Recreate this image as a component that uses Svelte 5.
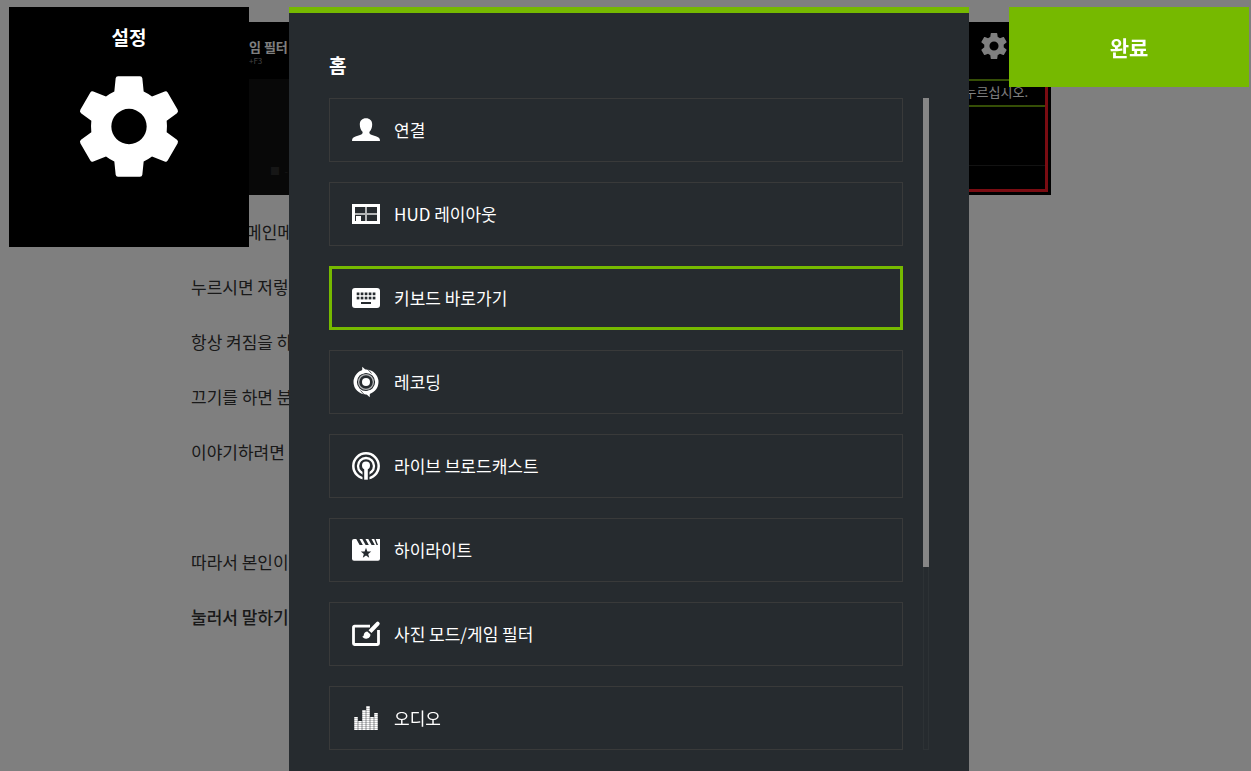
<script lang="ts">
    type MenuItem = {
        id: string;
        label: string;
    };

    const items: MenuItem[] = [
        { id: "connect", label: "연결" },
        { id: "hud", label: "HUD 레이아웃" },
        { id: "keyboard", label: "키보드 바로가기" },
        { id: "record", label: "레코딩" },
        { id: "broadcast", label: "라이브 브로드캐스트" },
        { id: "highlight", label: "하이라이트" },
        { id: "photo", label: "사진 모드/게임 필터" },
        { id: "audio", label: "오디오" }
    ];

    const keyCols = [4.7, 8.7, 12.7, 16.7, 20.7];

    // top of each equalizer bar
    const bars = [13, 17, 6, 2, 13, 9];

    let selected = $state("keyboard");
</script>

<main class="page">
    <div class="shot">
        <div class="shot-left">
            <div class="shot-head">
                <b>임 필터</b>
                <small>+F3</small>
            </div>
            <div class="shot-body">■ &nbsp;-</div>
        </div>
        <div class="shot-right">
            <div class="shot-head">
                <svg viewBox="2 2 20 20" width="26" height="26">
                    <path d="M19.43 12.98c.04-.32.07-.64.07-.98s-.03-.66-.07-.98l2.11-1.65c.19-.15.24-.42.12-.64l-2-3.46c-.12-.22-.39-.3-.61-.22l-2.49 1c-.52-.4-1.08-.73-1.69-.98l-.38-2.65C14.46 2.18 14.25 2 14 2h-4c-.25 0-.46.18-.49.42l-.38 2.65c-.61.25-1.17.59-1.69.98l-2.49-1c-.23-.09-.49 0-.61.22l-2 3.46c-.13.22-.07.49.12.64l2.11 1.65c-.04.32-.07.65-.07.98s.03.66.07.98l-2.11 1.65c-.19.15-.24.42-.12.64l2 3.46c.12.22.39.3.61.22l2.49-1c.52.4 1.08.73 1.69.98l.38 2.65c.03.24.24.42.49.42h4c.25 0 .46-.18.49-.42l.38-2.65c.61-.25 1.17-.59 1.69-.98l2.49 1c.23.09.49 0 .61-.22l2-3.46c.12-.22.07-.49-.12-.64l-2.11-1.65zM12 15.500a3.500 3.500 0 1 1 0-7 3.500 3.500 0 0 1 0 7z" />
                </svg>
            </div>
            <div class="shot-box">
                <div class="hint"><span>누르십시오.</span></div>
                <div class="shot-line"></div>
            </div>
        </div>
    </div>
    <p class="indent">메인메</p>
    <p>누르시면 저렇</p>
    <p>항상 켜짐을 하</p>
    <p>끄기를 하면 분</p>
    <p>이야기하려면</p>
    <p>&nbsp;</p>
    <p>따라서 본인이</p>
    <p><b>눌러서 말하기</b></p>
</main>

<div class="overlay">
    <section class="tile">
        <h1>설정</h1>
        <svg viewBox="-147 -151 294 302" width="98" height="101">
            <path fill-rule="evenodd" d="M-33-151H33Q39-151 40-145L44-105Q57-99 69-90L107-105Q113-107 116-102L146-50Q149-44 144-40L113-17Q115 0 113 17L144 40Q149 44 146 50L116 102Q113 107 107 105L69 90Q57 99 44 105L40 145Q39 151 33 151H-33Q-39 151-40 145L-44 105Q-57 99-69 90L-107 105Q-113 107-116 102L-146 50Q-149 44-144 40L-113 17Q-115 0-113-17L-144-40Q-149-44-146-50L-116-102Q-113-107-107-105L-69-90Q-57-99-44-105L-40-145Q-39-151-33-151ZM0-53A53 53 0 1 0 0 53A53 53 0 1 0 0-53Z" />
        </svg>
    </section>

    <section class="panel">
        <h2>홈</h2>
        <div class="scroll">
            <nav class="list">
                {#each items as item (item.id)}
                    <button class="item" class:active={selected === item.id} onclick={() => (selected = item.id)}>
                        <svg viewBox="0 0 28 28" width="28" height="28">
                            {#if item.id === "connect"}
                                <path d="M14 2.300c3.800 0 6.200 2.300 6.200 6.200 0 3.200-1.200 5.800-2.700 7.200-.5 1.600.2 2.400 1.800 3l5.200 1.800c2.400.9 3.500 1.700 3.500 4.500H0c0-2.800 1.100-3.600 3.500-4.500l5.200-1.800c1.600-.6 2.300-1.400 1.800-3C9 14.300 7.800 11.700 7.800 8.500c0-3.900 2.400-6.200 6.200-6.200z" />
                            {:else if item.id === "hud"}
                                <path fill-rule="evenodd" d="M0 4h28v20H0zM3 7v14h22V7z" />
                                <path class="dim" d="M13 7h2v14h-2zM3 13h22v2H3z" />
                                <path d="M4 16h5v5H4z" />
                            {:else if item.id === "keyboard"}
                                <rect y="4" width="28" height="20" rx="3" />
                                {#each keyCols as x}
                                    <rect class="cut" {x} y="8.500" width="2.700" height="2.700" />
                                    <rect class="cut" {x} y="12.700" width="2.700" height="2.700" />
                                {/each}
                                <rect class="cut" x="9" y="18" width="10" height="2" />
                            {:else if item.id === "record"}
                                <circle class="line" cx="14" cy="14" r="10.800" stroke-width="3.400" />
                                <path d="M10.300-1.200l5.400 5-5.700 2.200zM17.700 29.200l-5.400-5 5.700-2.200z" />
                                <path class="line cutline" d="M15.500 1l4 4.500M12.500 27l-4-4.500" stroke-width=".8" />
                                <circle class="line dim" cx="14" cy="14" r="7.400" stroke-width="1.300" />
                                <circle cx="14" cy="14" r="4" />
                            {:else if item.id === "broadcast"}
                                <circle class="line" cx="14" cy="14" r="12.700" stroke-width="2.500" />
                                <circle class="line" cx="14" cy="14" r="8" stroke-width="2.300" />
                                <path class="cut" d="M10.500 15h7v13.500h-7z" />
                                <circle cx="14" cy="13.500" r="4" />
                                <path d="M12.200 15h3.600v12.700h-3.600z" />
                            {:else if item.id === "highlight"}
                                <path d="M2 3h26v19.700a2 2 0 0 1-2 2H2a2 2 0 0 1-2-2V5a2 2 0 0 1 2-2z" />
                                <path class="cut" d="M4 2.500h3.200L10.800 9H7.600zM10 2.500h3.200L16.800 9h-3.200zM16 2.500h3.200L22.800 9h-3.200zM22 2.500h1.500L26 9h-1.500z" />
                                <path class="cut" d="M14 11.800l1.400 3.600 3.800.2-3 2.400 1 3.700-3.200-2.100-3.200 2.100 1-3.700-3-2.400 3.800-.2z" />
                            {:else if item.id === "photo"}
                                <path class="line" d="M18 6.200H2.500a1 1 0 0 0-1 1v16.300a1 1 0 0 0 1 1h23a1 1 0 0 0 1-1V10" stroke-width="2.800" />
                                <path d="M24.300 2.300a1.900 1.900 0 0 1 2.900 2.600L19.500 13l-3-2.700zM15.300 11.500l3 2.800c.5 2.500-1.800 4.600-4.300 4.400-1.800-.1-3.100-.8-3.900-2.100 1.300 0 1.600-.7 1.700-1.800.2-1.900 1.700-3.300 3.500-3.300z" />
                            {:else}
                                {#each bars as top, i}
                                    <line class="line bar" x1={4 + i * 4} x2={4 + i * 4} y1="26" y2={top} stroke-width="3.500" />
                                {/each}
                            {/if}
                        </svg>
                        <span>{item.label}</span>
                    </button>
                {/each}
            </nav>
            <div class="track">
                <div class="thumb"></div>
            </div>
        </div>
    </section>

    <button class="done">완료</button>
</div>

<style>
    :global(body) {
        background: #fff;
        font-family: "Noto Sans CJK KR", sans-serif;
        overflow: hidden;
    }
    h1, h2, p {
        margin: 0;
    }
    button {
        font-family: inherit;
        color: #fff;
        cursor: pointer;
    }
    svg {
        display: block;
        flex: none;
        fill: #fff;
        overflow: visible;
    }

    /* article behind the overlay */
    .page {
        max-width: 860px;
        margin: 0 auto;
        padding: 22px 9px 0 0;
        color: #333;
        font-size: 17px;
        line-height: 55px;
    }
    .page p {
        white-space: nowrap;
    }
    .page p b {
        font-weight: 500;
    }
    .page .indent {
        padding-left: 55px;
    }
    .shot {
        display: flex;
        justify-content: space-between;
        height: 173px;
        margin-bottom: 9px;
        background: #000;
        color: #fff;
        line-height: 16px;
    }
    .shot-left {
        width: 98px;
        display: flex;
        flex-direction: column;
    }
    .shot-left .shot-head {
        padding: 17px 0 0 58px;
        white-space: nowrap;
    }
    .shot-head {
        height: 57px;
        box-sizing: border-box;
    }
    .shot-head b {
        display: block;
        font-size: 13px;
        font-weight: 700;
    }
    .shot-head small {
        display: block;
        font-size: 8px;
        line-height: 12px;
        color: #888;
    }
    .shot-body {
        flex: 1;
        padding: 84px 0 0 79px;
        box-sizing: border-box;
        background: #101010;
        color: #2c2c2c;
        font-size: 10px;
        white-space: nowrap;
    }
    .shot-right {
        width: 82px;
        display: flex;
        flex-direction: column;
    }
    .shot-right .shot-head {
        padding: 11px 0 0 12px;
    }
    .shot-box {
        flex: 1;
        margin: 0 3px 3px 0;
        border: solid #f41824;
        border-width: 0 3px 3px 0;
    }
    .hint {
        display: flex;
        justify-content: flex-end;
        height: 24px;
        border: solid #6a9c0c;
        border-width: 2px 0;
        font-size: 13px;
        line-height: 22px;
        padding-right: 17px;
        white-space: nowrap;
    }
    .shot-line {
        height: 58px;
        border-bottom: 1px solid #242424;
    }

    /* overlay */
    .overlay {
        position: fixed;
        inset: 0;
        display: flex;
        align-items: flex-start;
        gap: 40px;
        padding: 7px 2px 0 9px;
        background: rgba(0, 0, 0, 0.5);
        color: #fff;
    }
    .tile {
        flex: 0 0 240px;
        height: 240px;
        display: flex;
        flex-direction: column;
        align-items: center;
        background: #000;
    }
    .tile h1 {
        margin: 16px 0 25px;
        font-size: 19px;
        line-height: 28px;
    }
    .panel {
        flex: 1;
        align-self: stretch;
        border-top: 6px solid #76b900;
        padding: 38px 40px 0;
        background: #262b2f;
    }
    .panel h2 {
        font-size: 19px;
        line-height: 28px;
        margin-bottom: 19px;
    }
    .scroll {
        display: flex;
        gap: 20px;
    }
    .list {
        flex: 1;
        display: flex;
        flex-direction: column;
        gap: 20px;
    }
    .item {
        display: flex;
        align-items: center;
        gap: 14px;
        height: 64px;
        padding: 0 22px;
        border: 1px solid #393a3a;
        background: none;
        font-size: 17px;
        line-height: 24px;
        text-align: left;
    }
    .item.active {
        border: 3px solid #76b900;
        padding: 0 20px;
    }
    .dim {
        opacity: 0.65;
    }
    .cut {
        fill: #262b2f;
    }
    .line {
        fill: none;
        stroke: #fff;
    }
    .cutline {
        stroke: #262b2f;
    }
    .bar {
        stroke-dasharray: 1.7 0.3;
    }
    .track {
        width: 6px;
        box-sizing: border-box;
        background: #262b2f;
        box-shadow: inset 0 0 0 1px #2d3235;
    }
    .thumb {
        height: 72%;
        background: #868686;
    }
    .done {
        flex: 0 0 240px;
        height: 80px;
        border: 0;
        background: #76b900;
        font-size: 21px;
        font-weight: 700;
    }
</style>
